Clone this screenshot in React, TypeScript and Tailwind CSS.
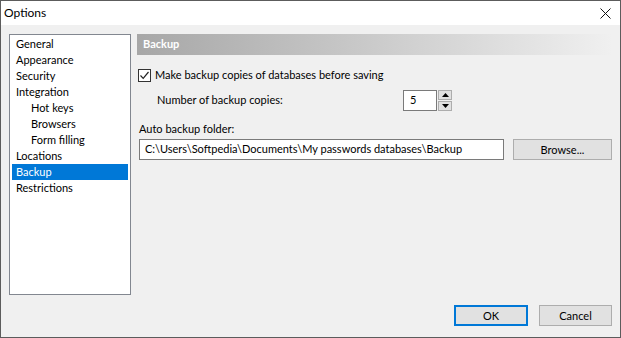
import React from "react";

const items: { label: string; indent?: boolean; selected?: boolean }[] = [
  { label: "General" },
  { label: "Appearance" },
  { label: "Security" },
  { label: "Integration" },
  { label: "Hot keys", indent: true },
  { label: "Browsers", indent: true },
  { label: "Form filling", indent: true },
  { label: "Locations" },
  { label: "Backup", selected: true },
  { label: "Restrictions" },
];

function Button({ label, primary }: { label: string; primary?: boolean }) {
  return (
    <button
      className={
        "w-full h-[21px] bg-[#e1e1e1] text-black flex items-center justify-center leading-none " +
        (primary ? "border-2 border-[#0078d7]" : "border border-[#adadad]")
      }
    >
      {label}
    </button>
  );
}

export default function App() {
  return (
    <div
      className="w-[621px] h-[338px] border border-[#5c5c5c] flex flex-col bg-[#f0f0f0] text-[11px] text-black overflow-hidden"
      style={{ fontFamily: 'Lato, "Liberation Sans", sans-serif' }}
    >
      {/* title bar */}
      <div className="h-[24px] bg-white flex items-center justify-between pl-[3px] pr-[9px] shrink-0">
        <span className="text-[12px] leading-none">Options</span>
        <svg width="11" height="11" viewBox="0 0 11 11">
          <path d="M0.5 0.5 L10.5 10.5 M10.5 0.5 L0.5 10.5" stroke="#111" strokeWidth="1" />
        </svg>
      </div>

      <div className="flex-1 flex flex-col pt-[9px] pl-[8px] pr-[8px] pb-[11px]">
        <div className="flex gap-[6px]">
          {/* tree */}
          <div className="w-[122px] h-[261px] bg-white border border-[#828790] px-[1px] pt-[1px] shrink-0">
            {items.map((it) => (
              <div
                key={it.label}
                className={
                  "h-[16px] flex items-center leading-none pb-[1px] ml-[1px] mr-[1px] " +
                  (it.selected ? "bg-[#0078d7] text-white " : "") +
                  (it.indent ? "pl-[19px]" : "pl-[4px]")
                }
              >
                {it.label}
              </div>
            ))}
          </div>

          {/* right panel */}
          <div className="flex-1 flex flex-col">
            <div className="h-[21px] bg-gradient-to-r from-[#a7a7a7] to-[#f0f0f0] flex items-center pl-[6px] text-white font-bold">
              Backup
            </div>

            <div className="flex items-center gap-[4px] mt-[13px] ml-[1px] h-[14px]">
              <div className="w-[13px] h-[13px] border border-[#333] bg-white flex items-center justify-center">
                <svg width="11" height="11" viewBox="0 0 11 11">
                  <path d="M1.5 5.5 L4.2 8.3 L9.5 2" fill="none" stroke="#222" strokeWidth="1.2" />
                </svg>
              </div>
              <span>Make backup copies of databases before saving</span>
            </div>

            <div className="flex items-center mt-[8px] ml-[20px]">
              <span className="w-[246px]">Number of backup copies:</span>
              <div className="w-[34px] h-[21px] bg-white border border-[#7a7a7a] flex items-center pl-[6px]">5</div>
              <div className="flex flex-col gap-[1px] ml-[1px]">
                <div className="w-[14px] h-[10px] bg-[#e1e1e1] border border-[#adadad] flex items-center justify-center">
                  <svg width="7" height="4" viewBox="0 0 7 4">
                    <path d="M0 4 L3.5 0 L7 4 Z" fill="#000" />
                  </svg>
                </div>
                <div className="w-[14px] h-[10px] bg-[#e1e1e1] border border-[#adadad] flex items-center justify-center">
                  <svg width="7" height="4" viewBox="0 0 7 4">
                    <path d="M0 0 L7 0 L3.5 4 Z" fill="#000" />
                  </svg>
                </div>
              </div>
            </div>

            <div className="mt-[12px] ml-[2px] leading-none">Auto backup folder:</div>

            <div className="flex items-center mt-[5px] ml-[2px] gap-[9px]">
              <div className="w-[365px] h-[21px] bg-white border border-[#7a7a7a] flex items-center pl-[5px] whitespace-nowrap overflow-hidden">
                C:\Users\Softpedia\Documents\My passwords databases\Backup
              </div>
              <div className="w-[99px]">
                <Button label="Browse..." />
              </div>
            </div>
          </div>
        </div>

        <div className="mt-auto flex justify-end gap-[11px]">
          <div className="w-[74px]">
            <Button label="OK" primary />
          </div>
          <div className="w-[73px]">
            <Button label="Cancel" />
          </div>
        </div>
      </div>
    </div>
  );
}
